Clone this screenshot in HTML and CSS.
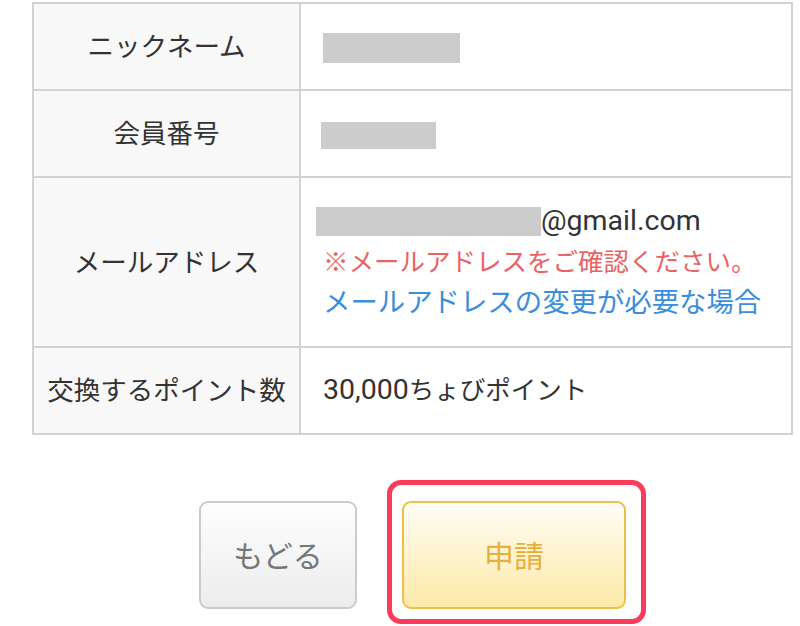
FILE: index.html
```html
<!DOCTYPE html>
<html lang="ja">
<head>
<meta charset="utf-8">
<link rel="stylesheet" href="styles.css">
</head>
<body>
<table class="info">
  <tr>
    <th>ニックネーム</th>
    <td><span class="mask mask-nick"></span></td>
  </tr>
  <tr>
    <th>会員番号</th>
    <td><span class="mask mask-id"></span></td>
  </tr>
  <tr class="tall">
    <th>メールアドレス</th>
    <td>
      <div class="mail"><span class="mask mask-mail"></span><span class="latin">@gmail.com</span></div>
      <div class="warn">※メールアドレスをご確認ください。</div>
      <div><a class="link" href="#">メールアドレスの変更が必要な場合</a></div>
    </td>
  </tr>
  <tr>
    <th>交換するポイント数</th>
    <td><span class="latin">30,000</span>ちょびポイント</td>
  </tr>
</table>
<div class="actions">
  <button class="btn btn-back">もどる</button>
  <div class="focus-wrap">
    <button class="btn btn-apply">申請</button>
  </div>
</div>
</body>
</html>
```
FILE: styles.css
```css
html, body {
  margin: 0;
  padding: 0;
  background: #ffffff;
}
body {
  font-family: "Roboto", "Noto Sans CJK JP", sans-serif;
  color: #333333;
  font-size: 26px;
  min-height: 626px;
}
.info {
  margin: 2px 0 0 32px;
  width: 761px;
  border-collapse: separate;
  border-spacing: 0;
  border-top: 2px solid #d2d2d2;
  border-left: 2px solid #d2d2d2;
}
.info th,
.info td {
  border-right: 2px solid #d2d2d2;
  border-bottom: 2px solid #d2d2d2;
  padding: 22px 0;
  line-height: 41px;
  height: 41px;
  font-weight: normal;
  vertical-align: middle;
}
.info th {
  width: 265px;
  background: #f8f8f8;
  text-align: center;
  color: #333333;
  font-size: 26.5px;
}
.info td {
  padding-left: 22px;
  text-align: left;
  font-size: 25.5px;
}
.info tr.tall th,
.info tr.tall td {
  padding-top: 23px;
  padding-bottom: 22px;
}
.latin {
  font-size: 28.5px;
  line-height: 1;
}
.mask {
  display: inline-block;
  background: #cccccc;
  vertical-align: middle;
}
.mask-nick {
  width: 137px;
  height: 30px;
}
.mask-id {
  width: 115px;
  height: 27px;
  margin-left: -2px;
}
.mask-mail {
  width: 225px;
  height: 29px;
  margin-left: -7px;
  position: relative;
  top: -2px;
}
.mail {
  height: 41px;
}
.warn {
  color: #e86464;
  font-size: 25.5px;
}
.link {
  color: #3a8edb;
  text-decoration: none;
  font-size: 27.4px;
  line-height: 1;
}
.actions {
  margin: 66px 0 0 32px;
  width: 761px;
  display: flex;
  justify-content: center;
  align-items: flex-start;
  gap: 45px;
}
.btn {
  display: block;
  font-family: "Roboto", "Noto Sans CJK JP", sans-serif;
  font-size: 30px;
  height: 108px;
  border-radius: 9px;
  padding: 0 0 3px;
  cursor: pointer;
}
.btn-back {
  width: 158px;
  border: 2px solid #cbcbcb;
  background: linear-gradient(#fefefe, #ececec);
  color: #777777;
}
.focus-wrap {
  position: relative;
}
.focus-wrap::before {
  content: "";
  position: absolute;
  left: -15px;
  right: -20px;
  top: -21px;
  bottom: -15px;
  border: 5px solid #fb3b5a;
  border-radius: 14px;
}
.btn-apply {
  width: 224px;
  border: 2px solid #efbf4a;
  background: linear-gradient(#fffdf6, #fdeaa8);
  color: #e9ae3a;
}
```
